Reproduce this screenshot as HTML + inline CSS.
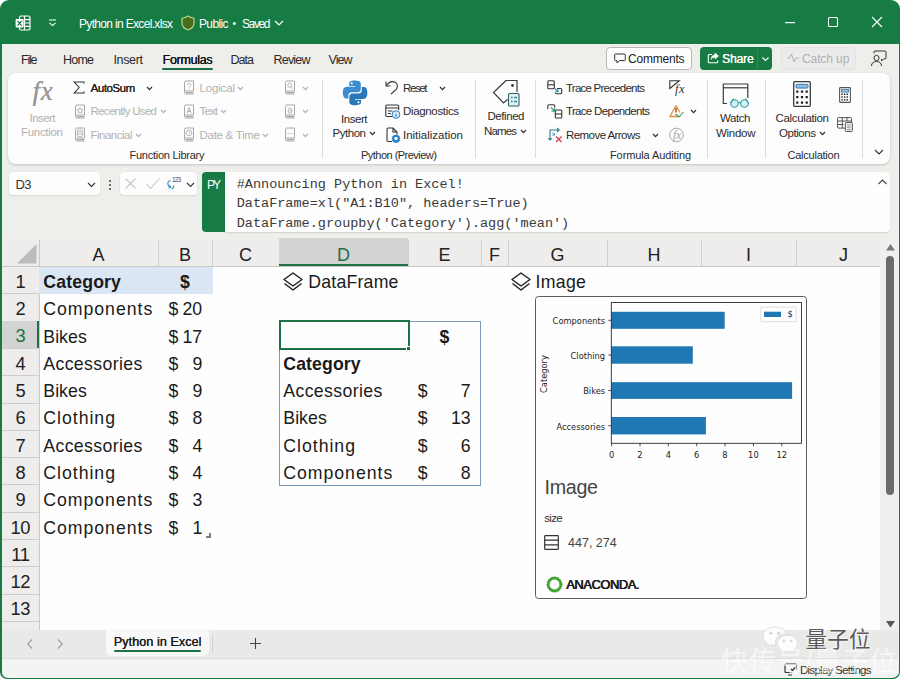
<!DOCTYPE html>
<html><head><meta charset="utf-8"><title>Python in Excel</title>
<style>
*{box-sizing:border-box;margin:0;padding:0}
html,body{width:900px;height:679px;overflow:hidden;background:#fff}
body{font-family:"Liberation Sans",sans-serif;color:#222;font-size:12px;position:relative}
.a{position:absolute;white-space:pre;line-height:1}
#win{position:absolute;left:0;top:0;width:900px;height:679px;background:#167c44;border-radius:9px 9px 7px 7px;overflow:hidden}
#inner{position:absolute;left:1.5px;top:43.5px;width:897.1px;height:633.8px;background:#eeeeeb;border-radius:0 0 5px 5px;overflow:hidden}
.tt{color:#fff;font-size:12px;letter-spacing:-.6px}
.mi{font-size:12px;color:#2a2a2a;top:54px;letter-spacing:-.2px}
#ribbon{position:absolute;left:8px;top:73px;width:882px;height:90.5px;background:#fdfdfd;border-radius:8px;box-shadow:0 1px 3px rgba(0,0,0,.18)}
.rt{font-size:11px;color:#2b2b2b;letter-spacing:-.15px}
.rd{font-size:11px;color:#b4b4b4;letter-spacing:-.15px}
.gl{font-size:10.5px;color:#2b2b2b;letter-spacing:-.1px;top:150px}
.sep{position:absolute;top:80px;width:1px;height:78px;background:#dcdcdc}
svg{position:absolute;overflow:visible}
</style></head><body>
<div id="win">
<div id="inner"></div>
<!-- TITLE BAR -->
<div id="titlebar">
<svg style="left:15px;top:15px" width="16" height="16" viewBox="0 0 16 16" fill="none" stroke="#fff" stroke-width="1.2"><rect x="4.5" y="1" width="10.5" height="14" rx="1.5"/><path d="M9.5 1v14M9.5 4.6h5.5M9.5 8h5.5M9.5 11.4h5.5"/><rect x="0.6" y="4" width="8" height="8.4" rx="1" fill="#fff" stroke="none"/><path d="M2.6 5.8l4 4.8M6.6 5.8l-4 4.8" stroke="#167c44" stroke-width="1.3"/></svg>
<svg style="left:48px;top:19px" width="9" height="8" viewBox="0 0 9 8" fill="none" stroke="#fff" stroke-width="1.1"><path d="M1 1h7M1.5 3.8l3 2.8 3-2.8"/></svg>
<svg style="left:181px;top:15px" width="14" height="16" viewBox="0 0 14 16"><path d="M7 1C5 2.4 3 3 1 3.2V8c0 3.4 2.6 5.8 6 7 3.4-1.200 6-3.600 6-7V3.200C11 3 9 2.400 7 1z" fill="#4a6d1c" stroke="#b9dc92" stroke-width="1.100"/></svg>
<svg style="left:274px;top:20px" width="10" height="6" viewBox="0 0 10 6" fill="none" stroke="#fff" stroke-width="1.200"><path d="M1 1l4 4 4-4"/></svg>
<svg style="left:785px;top:22px" width="10" height="1"><rect width="10" height="1.200" fill="#fff"/></svg>
<svg style="left:828px;top:17px" width="10" height="10" fill="none" stroke="#fff" stroke-width="1.100"><rect x=".5" y=".5" width="9" height="9" rx="1"/></svg>
<svg style="left:872px;top:17px" width="10" height="10" fill="none" stroke="#fff" stroke-width="1.100"><path d="M0 0l10 10M10 0L0 10"/></svg>
</div>
<!-- MENU BAR -->
<div id="menubar">
<span class="a" style="left:79.0px;top:18.0px;font-size:12px;letter-spacing:-0.67px;color:#fff;">Python in Excel.xlsx</span>
<span class="a" style="left:199.0px;top:18.0px;font-size:12px;letter-spacing:-0.64px;color:#fff;">Public</span>
<span class="a" style="left:232.5px;top:19.0px;font-size:10px;letter-spacing:-0.00px;color:#fff;">•</span>
<span class="a" style="left:242.0px;top:18.0px;font-size:12px;letter-spacing:-1.38px;color:#fff;">Saved</span>
<span class="a" style="left:21.0px;top:53.6px;font-size:12.5px;letter-spacing:-1.21px;color:#2a2a2a;">File</span>
<span class="a" style="left:63.0px;top:53.6px;font-size:12.5px;letter-spacing:-0.78px;color:#2a2a2a;">Home</span>
<span class="a" style="left:113.5px;top:53.6px;font-size:12.5px;letter-spacing:-0.35px;color:#2a2a2a;">Insert</span>
<span class="a" style="left:162.5px;top:53.6px;font-size:12.5px;letter-spacing:-0.30px;color:#111;text-shadow:.35px 0 0 #111;">Formulas</span>
<span class="a" style="left:230.5px;top:53.6px;font-size:12.5px;letter-spacing:-0.97px;color:#2a2a2a;">Data</span>
<span class="a" style="left:273.5px;top:53.6px;font-size:12.5px;letter-spacing:-0.80px;color:#2a2a2a;">Review</span>
<span class="a" style="left:328.5px;top:53.6px;font-size:12.5px;letter-spacing:-0.96px;color:#2a2a2a;">View</span>

<div class="a" style="left:162px;top:68px;width:51px;height:2px;background:#1b6e42;border-radius:1px"></div>
<div class="a" style="left:606px;top:47px;width:86px;height:23px;background:#fdfdfd;border:1px solid #b9b9b9;border-radius:4px"></div>
<svg style="left:614px;top:53px" width="12" height="11" viewBox="0 0 12 11" fill="none" stroke="#333" stroke-width="1"><path d="M1.500 1h9a.8.8 0 0 1 .8.8v5a.8.8 0 0 1-.8.8H5.500L3 10V7.600H1.500a.8.8 0 0 1-.8-.8v-5a.8.8 0 0 1 .8-.8z"/></svg>
<span class="a" style="left:628px;top:52.500px;font-size:12px;color:#222;letter-spacing:-.2px">Comments</span>
<div class="a" style="left:700px;top:47px;width:72px;height:23px;background:#167c44;border-radius:4px"></div>
<div class="a" style="left:757px;top:48px;width:1px;height:21px;background:#2f8a58"></div>
<svg style="left:707px;top:52px" width="13" height="12" viewBox="0 0 13 12" fill="none" stroke="#fff" stroke-width="1.100"><path d="M5 2.500H2.300a1 1 0 0 0-1 1v6.200a1 1 0 0 0 1 1h7.400a1 1 0 0 0 1-1V8.500"/><path d="M8 1l3.500 3L8 7V5.200C6 5.200 4.800 6 4 7.500 4.200 4.800 5.500 3 8 2.800z" fill="#fff" stroke-width=".6"/></svg>
<span class="a" style="left:722px;top:52.500px;font-size:12px;color:#fff;letter-spacing:-.1px;text-shadow:.3px 0 0 #fff">Share</span>
<svg style="left:762px;top:57px" width="7" height="4" viewBox="0 0 7 4" fill="none" stroke="#fff" stroke-width="1.100"><path d="M.5.500l3 3 3-3"/></svg>
<div class="a" style="left:781px;top:47px;width:75px;height:23px;background:#ebebeb;border:1px solid #e2e2e2;border-radius:4px"></div>
<svg style="left:787px;top:53px" width="12" height="10" viewBox="0 0 12 10" fill="none" stroke="#b5b5b5" stroke-width="1"><path d="M0 5h2.500l2-4 2.500 8 2-4h3"/></svg>
<span class="a" style="left:802px;top:52.500px;font-size:12px;color:#b0b0b0;letter-spacing:-.1px">Catch up</span>
<svg style="left:870px;top:50px" width="17" height="17" viewBox="0 0 17 17" fill="none" stroke="#333" stroke-width="1"><circle cx="6.500" cy="8" r="2.600"/><path d="M1.500 16c0-3 2-4.500 5-4.500s5 1.500 5 4.500"/><path d="M4 3.500V2a1 1 0 0 1 1-1h10a1 1 0 0 1 1 1v6a1 1 0 0 1-1 1h-1.500l-2 2V9"/></svg>

</div>
<!-- RIBBON -->
<div id="ribbon"></div>
<span class="a" style="left:32.5px;top:78.4px;font-size:26.5px;letter-spacing:0.87px;color:#989898;font-family:'Liberation Serif',serif;font-style:italic;text-shadow:.3px 0 0 #989898;">fx</span>
<span class="a" style="left:29.5px;top:113.3px;font-size:11.5px;letter-spacing:-0.55px;color:#b2b2b2;">Insert</span>
<span class="a" style="left:21.0px;top:127.0px;font-size:11.5px;letter-spacing:-0.30px;color:#b2b2b2;">Function</span>
<svg style="left:73px;top:81px" width="12" height="13" viewBox="0 0 12 13" ><path d="M11 2.500V1H1.200l5 5.500-5 5.500H11v-1.500" fill="none" stroke="#333" stroke-width="1.100"/></svg>
<span class="a" style="left:90.5px;top:83.3px;font-size:11.5px;letter-spacing:-0.47px;color:#1f1f1f;text-shadow:.3px 0 0 #1f1f1f;">AutoSum</span>
<svg style="left:146.0px;top:86.2px" width="7" height="4.6" viewBox="-1 -1 7 4.6" fill="none" stroke="#333" stroke-width="1.25"><path d="M0 0l2.5 2.6 2.5-2.6"/></svg>
<svg style="left:73.5px;top:104px" width="12" height="15" viewBox="0 0 12 15" ><g fill="none" stroke="#a8a8a8" stroke-width="1"><path d="M1.500 12.500V2.500a1.500 1.500 0 0 1 1.500-1.500h7.500v10H3a1.500 1.500 0 0 0 0 3h7.500"/><path d="M3 12.600h7.500" stroke-width="1.400"/><path d="M6 3.500l.9 1.800 2 .3-1.400 1.400.3 2L6 8.100 4.200 9l.3-2L3.100 5.600l2-.3z" stroke-width=".8"/></g></svg>
<span class="a" style="left:90.5px;top:106.3px;font-size:11.5px;letter-spacing:-0.69px;color:#b2b2b2;">Recently Used</span>
<svg style="left:159.5px;top:109.2px" width="7" height="4.6" viewBox="-1 -1 7 4.6" fill="none" stroke="#b2b2b2" stroke-width="1.25"><path d="M0 0l2.5 2.6 2.5-2.6"/></svg>
<svg style="left:73.5px;top:127px" width="12" height="15" viewBox="0 0 12 15" ><g fill="none" stroke="#a8a8a8" stroke-width="1"><path d="M1.500 12.500V2.500a1.500 1.500 0 0 1 1.500-1.500h7.500v10H3a1.500 1.500 0 0 0 0 3h7.500"/><path d="M3 12.600h7.500" stroke-width="1.400"/><ellipse cx="6" cy="4" rx="2.600" ry="1.200" stroke-width=".8"/><path d="M3.400 4v4.500c0 .7 1.200 1.200 2.600 1.200s2.600-.5 2.600-1.200V4M3.400 6.300c0 .7 1.200 1.200 2.600 1.200s2.600-.5 2.600-1.200" stroke-width=".8"/></g></svg>
<span class="a" style="left:90.5px;top:130.3px;font-size:11.5px;letter-spacing:-0.50px;color:#b2b2b2;">Financial</span>
<svg style="left:135.0px;top:133.2px" width="7" height="4.6" viewBox="-1 -1 7 4.6" fill="none" stroke="#b2b2b2" stroke-width="1.25"><path d="M0 0l2.5 2.6 2.5-2.6"/></svg>
<svg style="left:182.5px;top:80px" width="12" height="15" viewBox="0 0 12 15" ><g fill="none" stroke="#a8a8a8" stroke-width="1"><path d="M1.500 12.500V2.500a1.500 1.500 0 0 1 1.500-1.500h7.500v10H3a1.500 1.500 0 0 0 0 3h7.500"/><path d="M3 12.600h7.500" stroke-width="1.400"/><path d="M4.500 5c0-1 .6-1.700 1.600-1.700S7.700 4 7.700 4.800c0 1.200-1.600 1.300-1.600 2.600M6.100 8.800v.8" stroke-width=".9"/></g></svg>
<span class="a" style="left:199.5px;top:83.3px;font-size:11.5px;letter-spacing:-0.16px;color:#b2b2b2;">Logical</span>
<svg style="left:236.5px;top:86.2px" width="7" height="4.6" viewBox="-1 -1 7 4.6" fill="none" stroke="#b2b2b2" stroke-width="1.25"><path d="M0 0l2.5 2.6 2.5-2.6"/></svg>
<svg style="left:182.5px;top:104px" width="12" height="15" viewBox="0 0 12 15" ><g fill="none" stroke="#a8a8a8" stroke-width="1"><path d="M1.500 12.500V2.500a1.500 1.500 0 0 1 1.500-1.500h7.500v10H3a1.500 1.500 0 0 0 0 3h7.500"/><path d="M3 12.600h7.500" stroke-width="1.400"/><path d="M4 9.500l2.100-6 2.100 6M4.700 7.500h2.800" stroke-width=".9"/></g></svg>
<span class="a" style="left:199.5px;top:106.3px;font-size:11.5px;letter-spacing:-0.86px;color:#b2b2b2;">Text</span>
<svg style="left:220.0px;top:109.2px" width="7" height="4.6" viewBox="-1 -1 7 4.6" fill="none" stroke="#b2b2b2" stroke-width="1.25"><path d="M0 0l2.5 2.6 2.5-2.6"/></svg>
<svg style="left:182.5px;top:127px" width="12" height="15" viewBox="0 0 12 15" ><g fill="none" stroke="#a8a8a8" stroke-width="1"><path d="M1.500 12.500V2.500a1.500 1.500 0 0 1 1.500-1.500h7.500v10H3a1.500 1.500 0 0 0 0 3h7.500"/><path d="M3 12.600h7.500" stroke-width="1.400"/><circle cx="6" cy="6" r="2.800" stroke-width=".8"/><path d="M6 4.300V6l1.200.8" stroke-width=".8"/></g></svg>
<span class="a" style="left:199.5px;top:130.3px;font-size:11.5px;letter-spacing:-0.28px;color:#b2b2b2;">Date &amp; Time</span>
<svg style="left:261.5px;top:133.2px" width="7" height="4.6" viewBox="-1 -1 7 4.6" fill="none" stroke="#b2b2b2" stroke-width="1.25"><path d="M0 0l2.5 2.6 2.5-2.6"/></svg>
<svg style="left:283.5px;top:80px" width="12" height="15" viewBox="0 0 12 15" ><g fill="none" stroke="#a8a8a8" stroke-width="1"><path d="M1.500 12.500V2.500a1.500 1.500 0 0 1 1.500-1.500h7.500v10H3a1.500 1.500 0 0 0 0 3h7.500"/><path d="M3 12.600h7.500" stroke-width="1.400"/><circle cx="5.600" cy="5.200" r="2" stroke-width=".8"/><path d="M7 6.800l1.800 2" stroke-width=".9"/></g></svg>
<svg style="left:301.5px;top:86.2px" width="7" height="4.6" viewBox="-1 -1 7 4.6" fill="none" stroke="#b2b2b2" stroke-width="1.25"><path d="M0 0l2.5 2.6 2.5-2.6"/></svg>
<svg style="left:283.5px;top:104px" width="12" height="15" viewBox="0 0 12 15" ><g fill="none" stroke="#a8a8a8" stroke-width="1"><path d="M1.500 12.500V2.500a1.500 1.500 0 0 1 1.500-1.500h7.500v10H3a1.500 1.500 0 0 0 0 3h7.500"/><path d="M3 12.600h7.500" stroke-width="1.400"/><path d="M4.200 6a1.800 1.800 0 0 1 3.600 0v1.500a1.800 1.800 0 0 1-3.600 0zM4.200 6.800h3.600" stroke-width=".8"/></g></svg>
<svg style="left:301.5px;top:109.2px" width="7" height="4.6" viewBox="-1 -1 7 4.6" fill="none" stroke="#b2b2b2" stroke-width="1.25"><path d="M0 0l2.5 2.6 2.5-2.6"/></svg>
<svg style="left:283.5px;top:127px" width="12" height="15" viewBox="0 0 12 15" ><g fill="none" stroke="#a8a8a8" stroke-width="1"><path d="M1.500 12.500V2.500a1.500 1.500 0 0 1 1.500-1.500h7.500v10H3a1.500 1.500 0 0 0 0 3h7.500"/><path d="M3 12.600h7.500" stroke-width="1.400"/><path d="M3.600 6.500h.9M5.600 6.500h.9M7.600 6.500h.9" stroke-width="1.100"/></g></svg>
<svg style="left:301.5px;top:133.2px" width="7" height="4.6" viewBox="-1 -1 7 4.6" fill="none" stroke="#b2b2b2" stroke-width="1.25"><path d="M0 0l2.5 2.6 2.5-2.6"/></svg>
<span class="a" style="left:129.5px;top:149.5px;font-size:11px;letter-spacing:-0.26px;color:#2b2b2b;">Function Library</span>
<div class="sep" style="left:322px"></div>
<svg style="left:341.8px;top:80.2px" width="26.2" height="25.7" viewBox="0 0 25.600 25.100" ><path d="M12.700 0.500c-6 0-5.700 2.600-5.700 2.600v2.700h5.800v.8H4.700S.8 6.200.8 12.300s3.400 5.900 3.400 5.900h2v-2.800s-.1-3.400 3.300-3.400h5.700s3.200.1 3.200-3.100V3.700S18.900.500 12.700.500zM9.500 2.300a1 1 0 1 1 0 2.100 1 1 0 0 1 0-2.100z" fill="#3b8dd0"/><path d="M12.900 24.600c6 0 5.700-2.600 5.700-2.600v-2.700h-5.800v-.8h8.100s3.900.4 3.900-5.700-3.400-5.900-3.400-5.900h-2v2.800s.1 3.400-3.300 3.400H10.400s-3.200-.1-3.200 3.100v5.200s-.5 3.200 5.700 3.200zm3.200-1.800a1 1 0 1 1 0-2.100 1 1 0 0 1 0 2.100z" fill="#2877b9"/></svg>
<span class="a" style="left:341.0px;top:113.5px;font-size:11.5px;letter-spacing:-0.45px;color:#2b2b2b;">Insert</span>
<span class="a" style="left:332.5px;top:128.3px;font-size:11.5px;letter-spacing:-0.46px;color:#2b2b2b;">Python</span>
<svg style="left:369.0px;top:131.2px" width="7" height="4.6" viewBox="-1 -1 7 4.6" fill="none" stroke="#333" stroke-width="1.25"><path d="M0 0l2.5 2.6 2.5-2.6"/></svg>
<svg style="left:385px;top:80px" width="14" height="15" viewBox="0 0 14 15" ><path d="M1 1.500v4.500h4.500" fill="none" stroke="#333" stroke-width="1.100"/><path d="M1.300 5.800C3.500 2.500 7 .800 10 2.200c2.800 1.300 3.200 4.800 1 7.500L6 14" fill="none" stroke="#333" stroke-width="1.100"/></svg>
<span class="a" style="left:403.0px;top:83.3px;font-size:11.5px;letter-spacing:-1.39px;color:#2b2b2b;">Reset</span>
<svg style="left:438.5px;top:86.2px" width="7" height="4.6" viewBox="-1 -1 7 4.6" fill="none" stroke="#333" stroke-width="1.25"><path d="M0 0l2.5 2.6 2.5-2.6"/></svg>
<svg style="left:384.5px;top:104px" width="16" height="15" viewBox="0 0 16 15" ><g fill="none" stroke="#333" stroke-width="1.100"><path d="M7.500 12.500H2a1.200 1.200 0 0 1-1.200-1.200V2.200A1.200 1.200 0 0 1 2 1h10.500a1.200 1.200 0 0 1 1.200 1.200V6M.8 4h12.900M3 7h4.500M3 9.500h3"/></g><circle cx="11" cy="10.500" r="3.800" fill="#d7ecfa" stroke="#2b7fc3" stroke-width="1"/><path d="M11 8.300v.2M11 10v2.500" stroke="#2b7fc3" stroke-width="1.200"/></svg>
<span class="a" style="left:403.0px;top:106.3px;font-size:11.5px;letter-spacing:-0.34px;color:#2b2b2b;">Diagnostics</span>
<svg style="left:386px;top:127px" width="15" height="16" viewBox="0 0 15 16" ><path d="M6 14.500H2.200A1.200 1.200 0 0 1 1 13.300V2.200A1.200 1.200 0 0 1 2.200 1H7l4 4v2.500M7 1v4h4" fill="none" stroke="#333" stroke-width="1.100"/><g transform="translate(10 11.500)"><path d="M0-4.200l1 .9 1.300-.4.400 1.300 1.300.4-.4 1.300.9 1-.9 1 .4 1.300-1.300.4-.4 1.300-1.300-.4-1 .9-1-.9-1.300.4-.4-1.300-1.300-.4.400-1.300-.9-1 .9-1-.4-1.300 1.300-.4.400-1.300 1.300.4z" fill="#2b7fc3"/><circle r="1.700" fill="#f4f9fd"/></g></svg>
<span class="a" style="left:403.0px;top:130.3px;font-size:11.5px;letter-spacing:-0.01px;color:#2b2b2b;">Initialization</span>
<span class="a" style="left:361.0px;top:149.5px;font-size:11px;letter-spacing:-0.52px;color:#2b2b2b;">Python (Preview)</span>
<div class="sep" style="left:475px"></div>
<svg style="left:492px;top:79px" width="30" height="28" viewBox="0 0 30 28" ><path d="M14 1.500L1.500 13.500 11.500 24l4-3.500M14 1.500h11v11.500" fill="none" stroke="#3a3a3a" stroke-width="1.200"/><circle cx="20.500" cy="6.500" r="1.400" fill="#3a3a3a"/><rect x="16.500" y="14.500" width="10.500" height="12.500" rx="1" fill="#e3f1f3" stroke="#2f5d66" stroke-width="1.100"/><path d="M19 18.500h1.600M22 18.500h3M19 22.500h1.600M22 22.500h3" stroke="#2f8a99" stroke-width="1.400" fill="none"/></svg>
<span class="a" style="left:487.5px;top:111.3px;font-size:11.5px;letter-spacing:-0.44px;color:#2b2b2b;">Defined</span>
<span class="a" style="left:484.0px;top:126.3px;font-size:11.5px;letter-spacing:-0.86px;color:#2b2b2b;">Names</span>
<svg style="left:519.5px;top:129.2px" width="7" height="4.6" viewBox="-1 -1 7 4.6" fill="none" stroke="#333" stroke-width="1.25"><path d="M0 0l2.5 2.6 2.5-2.6"/></svg>
<div class="sep" style="left:535px"></div>
<svg style="left:547px;top:80px" width="16" height="15" viewBox="0 0 16 15" ><g fill="none" stroke="#333" stroke-width="1.100"><rect x=".8" y=".8" width="6.500" height="8" rx="1"/><path d="M.8 4.800h6.500"/><path d="M10 8.500h3.500a1.200 1.200 0 0 1 1.200 1.200v2.800a1.200 1.200 0 0 1-1.200 1.200H9.500a1.200 1.200 0 0 1-1.200-1.200"/></g><path d="M7.800 8.500l3 3M8.500 11.600h2.500V9" fill="none" stroke="#2d9aa8" stroke-width="1.100"/></svg>
<span class="a" style="left:566.0px;top:83.3px;font-size:11.5px;letter-spacing:-0.76px;color:#2b2b2b;">Trace Precedents</span>
<svg style="left:547px;top:104px" width="16" height="15" viewBox="0 0 16 15" ><g fill="none" stroke="#333" stroke-width="1.100"><path d="M.8 5V2a1.200 1.200 0 0 1 1.200-1.200h4.500A1.200 1.200 0 0 1 7.700 2v1.500"/><rect x="8.300" y="6" width="6.500" height="8" rx="1"/><path d="M8.300 10h6.500"/></g><path d="M4 3.500l3.500 3.500M4.500 7.200h3.200V4" fill="none" stroke="#2d9a70" stroke-width="1.100"/></svg>
<span class="a" style="left:566.0px;top:106.3px;font-size:11.5px;letter-spacing:-0.68px;color:#2b2b2b;">Trace Dependents</span>
<svg style="left:547px;top:127px" width="17" height="16" viewBox="0 0 17 16" ><path d="M3 13V3h9M10 1l2.200 2L10 5M1 11l2 2.200L5 11" fill="none" stroke="#3c7f8c" stroke-width="1.100"/><path d="M5 5.500l2.500 2.500M5.500 8.100h2.100V6" fill="none" stroke="#2d9aa8" stroke-width=".9"/><path d="M9 9.500l5.500 5.500M14.500 9.500L9 15" stroke="#d8364a" stroke-width="1.200"/></svg>
<span class="a" style="left:566.0px;top:130.3px;font-size:11.5px;letter-spacing:-0.56px;color:#2b2b2b;">Remove Arrows</span>
<svg style="left:651.5px;top:133.2px" width="7" height="4.6" viewBox="-1 -1 7 4.6" fill="none" stroke="#333" stroke-width="1.25"><path d="M0 0l2.5 2.6 2.5-2.6"/></svg>
<svg style="left:669px;top:80px" width="16" height="15" viewBox="0 0 16 15" ><path d="M.8 8.500V.8h9.500z" fill="none" stroke="#333" stroke-width="1.100"/></svg>
<span class="a" style="left:675.0px;top:82.8px;font-size:12.5px;letter-spacing:0.48px;color:#333;font-family:'Liberation Serif',serif;font-style:italic;">fx</span>
<svg style="left:669px;top:104px" width="16" height="15" viewBox="0 0 16 15" ><path d="M7 1.500L1 12.500h8" fill="none" stroke="#e0913a" stroke-width="1.300"/><path d="M7 1.500l4 7" fill="none" stroke="#e0913a" stroke-width="1.300"/><path d="M7 4v4.500M7 10v1" stroke="#8a4a12" stroke-width="1.400"/><path d="M7.500 10.500l2.500 2.500 4.500-5" fill="none" stroke="#3d9b4b" stroke-width="1.100"/></svg>
<svg style="left:689.5px;top:109.2px" width="7" height="4.6" viewBox="-1 -1 7 4.6" fill="none" stroke="#333" stroke-width="1.25"><path d="M0 0l2.5 2.6 2.5-2.6"/></svg>
<svg style="left:669px;top:127px" width="16" height="16" viewBox="0 0 16 16" ><circle cx="7.500" cy="8" r="6.800" fill="none" stroke="#a6a6a6" stroke-width="1"/></svg>
<span class="a" style="left:673.0px;top:130.3px;font-size:11.5px;letter-spacing:-0.30px;color:#a6a6a6;font-family:'Liberation Serif',serif;font-style:italic;">fx</span>
<span class="a" style="left:610.0px;top:149.5px;font-size:11px;letter-spacing:-0.10px;color:#2b2b2b;">Formula Auditing</span>
<div class="sep" style="left:707px"></div>
<svg style="left:722px;top:83px" width="29" height="26" viewBox="0 0 29 26" ><path d="M5 20.500H1.300V1h24.500v14" fill="none" stroke="#3a3a3a" stroke-width="1.200"/><path d="M1.300 4.800h24.500" stroke="#3a3a3a" stroke-width="1.200"/><circle cx="12.500" cy="20.500" r="3.800" fill="#d5f0f1" stroke="#2d9aa8" stroke-width="1.100"/><circle cx="22.500" cy="20.500" r="3.800" fill="#d5f0f1" stroke="#2d9aa8" stroke-width="1.100"/><path d="M16.300 20c.8-.8 1.600-.8 2.400 0M8.700 20l3-4.500M26.300 20l-3-4.500" fill="none" stroke="#2d9aa8" stroke-width="1.100"/></svg>
<span class="a" style="left:720.0px;top:112.8px;font-size:11.5px;letter-spacing:-0.42px;color:#2b2b2b;">Watch</span>
<span class="a" style="left:716.0px;top:127.8px;font-size:11.5px;letter-spacing:-0.28px;color:#2b2b2b;">Window</span>
<div class="sep" style="left:765px"></div>
<svg style="left:793px;top:81px" width="18" height="26" viewBox="0 0 18 26" ><rect x=".7" y=".7" width="16.600" height="24.600" rx="1" fill="#fdfdfd" stroke="#3a3a3a" stroke-width="1.300"/><rect x="3" y="3.300" width="12" height="3.800" rx=".8" fill="#8fc0e8" stroke="#2a6aa6" stroke-width=".9"/><rect x="3.2" y="9.5" width="2.200" height="2.200" fill="#1a1a1a"/><rect x="7.9" y="9.5" width="2.200" height="2.200" fill="#1a1a1a"/><rect x="12.6" y="9.5" width="2.200" height="2.200" fill="#1a1a1a"/><rect x="3.2" y="15" width="2.200" height="2.200" fill="#1a1a1a"/><rect x="7.9" y="15" width="2.200" height="2.200" fill="#1a1a1a"/><rect x="12.6" y="15" width="2.200" height="2.200" fill="#1a1a1a"/><rect x="3.2" y="20.5" width="2.200" height="2.200" fill="#1a1a1a"/><rect x="7.9" y="20.5" width="2.200" height="2.200" fill="#1a1a1a"/><rect x="12.6" y="20.5" width="2.200" height="2.200" fill="#1a1a1a"/></svg>
<span class="a" style="left:775.5px;top:112.8px;font-size:11.5px;letter-spacing:-0.34px;color:#2b2b2b;">Calculation</span>
<span class="a" style="left:779.0px;top:127.8px;font-size:11.5px;letter-spacing:-0.44px;color:#2b2b2b;">Options</span>
<svg style="left:819.0px;top:130.7px" width="7" height="4.6" viewBox="-1 -1 7 4.6" fill="none" stroke="#333" stroke-width="1.25"><path d="M0 0l2.5 2.6 2.5-2.6"/></svg>
<svg style="left:839px;top:87px" width="12" height="16" viewBox="0 0 12 16" ><rect x=".6" y=".6" width="10.800" height="14.800" rx=".8" fill="#fdfdfd" stroke="#555" stroke-width="1.100"/><rect x="2.300" y="2.500" width="7.400" height="2.600" fill="#8fc0e8" stroke="#2a6aa6" stroke-width=".7"/><rect x="2.3" y="6.5" width="1.500" height="1.500" fill="#333"/><rect x="4.9" y="6.5" width="1.500" height="1.500" fill="#333"/><rect x="7.5" y="6.5" width="1.500" height="1.500" fill="#333"/><rect x="2.3" y="9.3" width="1.500" height="1.500" fill="#333"/><rect x="4.9" y="9.3" width="1.500" height="1.500" fill="#333"/><rect x="7.5" y="9.3" width="1.500" height="1.500" fill="#333"/><rect x="2.3" y="12.1" width="1.500" height="1.500" fill="#333"/><rect x="4.9" y="12.1" width="1.500" height="1.500" fill="#333"/><rect x="7.5" y="12.1" width="1.500" height="1.500" fill="#333"/></svg>
<svg style="left:837px;top:117px" width="16" height="15" viewBox="0 0 16 15" ><g fill="none" stroke="#555" stroke-width="1"><rect x=".6" y=".6" width="14" height="10.500" rx=".8"/><path d="M.6 4h14M5.300 .6v10.500M10 .6V4M.6 7.500h6"/></g><rect x="8.300" y="5.500" width="7" height="9" rx=".8" fill="#f0f0f0" stroke="#555" stroke-width="1"/><path d="M10 8h3.600M10 10.200h3.600M10 12.400h3.600" stroke="#777" stroke-width=".8"/></svg>
<span class="a" style="left:787.5px;top:149.5px;font-size:11px;letter-spacing:-0.24px;color:#2b2b2b;">Calculation</span>
<div class="sep" style="left:862px"></div>
<svg style="left:874.0px;top:148.5px" width="10" height="6" viewBox="-1 -1 10 6" fill="none" stroke="#333" stroke-width="1.1"><path d="M0 0l4.0 4 4.0-4"/></svg>

<div style="position:absolute;background:#fdfdfd;border-radius:4px;box-shadow:0 0 0 .5px #e3e3e3,0 1px 1.500px rgba(0,0,0,.13);left:9px;top:172px;width:91px;height:23px"></div>
<span class="a" style="left:15.5px;top:177.8px;font-size:13px;letter-spacing:-0.62px;color:#333;">D3</span>
<svg style="left:86.5px;top:181.8px" width="9" height="5.5" viewBox="-1 -1 9 5.5" fill="none" stroke="#333" stroke-width="1.1"><path d="M0 0l3.5 3.5 3.5-3.5"/></svg>
<div class="a" style="left:108.500px;top:179.5px;width:2px;height:2px;border-radius:1px;background:#444"></div>
<div class="a" style="left:108.500px;top:183.5px;width:2px;height:2px;border-radius:1px;background:#444"></div>
<div class="a" style="left:108.500px;top:187.5px;width:2px;height:2px;border-radius:1px;background:#444"></div>
<div style="position:absolute;background:#fdfdfd;border-radius:4px;box-shadow:0 0 0 .5px #e3e3e3,0 1px 1.500px rgba(0,0,0,.13);left:120px;top:172px;width:77px;height:23px"></div>
<svg style="left:125px;top:178px" width="11" height="11" fill="none" stroke="#c6c6c6" stroke-width="1.100"><path d="M.5.500l10 10M10.500.500l-10 10"/></svg>
<svg style="left:146px;top:178px" width="14" height="11" fill="none" stroke="#c6c6c6" stroke-width="1.100"><path d="M.5 6l4 4.500 9-10"/></svg>
<svg style="left:166px;top:176px" width="16" height="15" viewBox="0 0 16 15" fill="none"><path d="M4.500 4.500C2.500 5 1.500 6.500 2 8.500c.4 1.300 1.300 2 2.500 2.300" stroke="#3a8fd0" stroke-width="1.200"/><path d="M3 9l1.800 2-2.300 1.300" stroke="#3a8fd0" stroke-width="1.100"/><path d="M5.500 13c1.800-.5 2.500-2 2-3.500" stroke="#3aa88a" stroke-width="1.200"/></svg>
<span class="a" style="left:172.0px;top:177.2px;font-size:6.5px;letter-spacing:-0.92px;color:#444;">123</span>
<svg style="left:185.5px;top:181.8px" width="9" height="5.5" viewBox="-1 -1 9 5.5" fill="none" stroke="#333" stroke-width="1.1"><path d="M0 0l3.5 3.5 3.5-3.5"/></svg>
<div class="a" style="left:202px;top:172px;width:24px;height:60px;background:#167c44;border-radius:4px 0 0 4px"></div>
<span class="a" style="left:207.0px;top:178.5px;font-size:12px;letter-spacing:-2.01px;color:#fff;">PY</span>
<div class="a" style="left:225px;top:172px;width:665px;height:60px;background:#fdfdfd;border-radius:0 4px 4px 0;box-shadow:0 1px 1.500px rgba(0,0,0,.12)"></div>
<span class="a" style="left:236.700px;top:178.2px;font-size:13.52px;font-family:'Liberation Mono',monospace;color:#3a3a3a">#Announcing Python in Excel!</span>
<span class="a" style="left:236.700px;top:197.4px;font-size:13.52px;font-family:'Liberation Mono',monospace;color:#3a3a3a">DataFrame=xl("A1:B10", headers=True)</span>
<span class="a" style="left:236.700px;top:216.5px;font-size:13.52px;font-family:'Liberation Mono',monospace;color:#3a3a3a">DataFrame.groupby('Category').agg('mean')</span>
<svg style="left:878px;top:179px" width="9" height="6" fill="none" stroke="#444" stroke-width="1.100"><path d="M.5 5l4-4 4 4"/></svg>

<div class="a" style="left:2px;top:238px;width:896px;height:392px;background:#eeedeb"></div>
<div class="a" style="left:39px;top:266px;width:841px;height:364px;background:#fefefe"></div>
<div class="a" style="left:2px;top:265.500px;width:878px;height:1px;background:#c9c9c9"></div>
<svg style="left:16.500px;top:243.500px" width="19.500" height="19.500"><path d="M19.500 0v19.500H0z" fill="#bcbcbc"/></svg>
<span class="a" style="left:92.5px;top:245.7px;font-size:18px;letter-spacing:0.00px;color:#222;">A</span>
<div class="a" style="left:157.5px;top:240px;width:1px;height:26px;background:#d0d0d0"></div>
<span class="a" style="left:179.0px;top:245.7px;font-size:18px;letter-spacing:-0.00px;color:#222;">B</span>
<div class="a" style="left:211.5px;top:240px;width:1px;height:26px;background:#d0d0d0"></div>
<span class="a" style="left:239.0px;top:245.7px;font-size:18px;letter-spacing:-0.00px;color:#222;">C</span>
<div class="a" style="left:278.5px;top:240px;width:1px;height:26px;background:#d0d0d0"></div>
<div class="a" style="left:279px;top:238px;width:129px;height:28px;background:#d3d3d3;border-bottom:2px solid #1e7145"></div>
<span class="a" style="left:337.0px;top:245.7px;font-size:18px;letter-spacing:-0.00px;color:#1e7145;">D</span>
<div class="a" style="left:407.5px;top:240px;width:1px;height:26px;background:#d0d0d0"></div>
<span class="a" style="left:438.5px;top:245.7px;font-size:18px;letter-spacing:-0.00px;color:#222;">E</span>
<div class="a" style="left:480.5px;top:240px;width:1px;height:26px;background:#d0d0d0"></div>
<span class="a" style="left:489.0px;top:245.7px;font-size:18px;letter-spacing:0.00px;color:#222;">F</span>
<div class="a" style="left:507.5px;top:240px;width:1px;height:26px;background:#d0d0d0"></div>
<span class="a" style="left:550.5px;top:245.7px;font-size:18px;letter-spacing:0.00px;color:#222;">G</span>
<div class="a" style="left:606.5px;top:240px;width:1px;height:26px;background:#d0d0d0"></div>
<span class="a" style="left:647.5px;top:245.7px;font-size:18px;letter-spacing:0.00px;color:#222;">H</span>
<div class="a" style="left:700.5px;top:240px;width:1px;height:26px;background:#d0d0d0"></div>
<span class="a" style="left:746.0px;top:245.7px;font-size:18px;letter-spacing:0.00px;color:#222;">I</span>
<div class="a" style="left:795.5px;top:240px;width:1px;height:26px;background:#d0d0d0"></div>
<span class="a" style="left:839.0px;top:245.7px;font-size:18px;letter-spacing:0.00px;color:#222;">J</span>
<div class="a" style="left:879.5px;top:240px;width:1px;height:26px;background:#d0d0d0"></div>
<div class="a" style="left:38.500px;top:240px;width:1px;height:390px;background:#c9c9c9"></div>
<span class="a" style="left:15.5px;top:272.8px;font-size:18.3px;letter-spacing:-0.17px;color:#222;">1</span>
<div class="a" style="left:2px;top:293.3px;width:37px;height:1px;background:#cdcdcd"></div>
<span class="a" style="left:15.5px;top:300.1px;font-size:18.3px;letter-spacing:-0.17px;color:#222;">2</span>
<div class="a" style="left:2px;top:320.6px;width:37px;height:1px;background:#cdcdcd"></div>
<div class="a" style="left:2px;top:321.1px;width:37px;height:27.3px;background:#d3d3d3;border-right:2px solid #1e7145"></div>
<span class="a" style="left:15.5px;top:327.4px;font-size:18.3px;letter-spacing:-0.17px;color:#1e7145;">3</span>
<div class="a" style="left:2px;top:347.9px;width:37px;height:1px;background:#cdcdcd"></div>
<span class="a" style="left:15.5px;top:354.7px;font-size:18.3px;letter-spacing:-0.17px;color:#222;">4</span>
<div class="a" style="left:2px;top:375.2px;width:37px;height:1px;background:#cdcdcd"></div>
<span class="a" style="left:15.5px;top:382.0px;font-size:18.3px;letter-spacing:-0.17px;color:#222;">5</span>
<div class="a" style="left:2px;top:402.5px;width:37px;height:1px;background:#cdcdcd"></div>
<span class="a" style="left:15.5px;top:409.3px;font-size:18.3px;letter-spacing:-0.17px;color:#222;">6</span>
<div class="a" style="left:2px;top:429.8px;width:37px;height:1px;background:#cdcdcd"></div>
<span class="a" style="left:15.5px;top:436.6px;font-size:18.3px;letter-spacing:-0.17px;color:#222;">7</span>
<div class="a" style="left:2px;top:457.1px;width:37px;height:1px;background:#cdcdcd"></div>
<span class="a" style="left:15.5px;top:463.9px;font-size:18.3px;letter-spacing:-0.17px;color:#222;">8</span>
<div class="a" style="left:2px;top:484.4px;width:37px;height:1px;background:#cdcdcd"></div>
<span class="a" style="left:15.5px;top:491.2px;font-size:18.3px;letter-spacing:-0.17px;color:#222;">9</span>
<div class="a" style="left:2px;top:511.7px;width:37px;height:1px;background:#cdcdcd"></div>
<span class="a" style="left:10.5px;top:518.5px;font-size:18.3px;letter-spacing:-0.33px;color:#222;">10</span>
<div class="a" style="left:2px;top:539.0px;width:37px;height:1px;background:#cdcdcd"></div>
<span class="a" style="left:11.2px;top:545.8px;font-size:18.3px;letter-spacing:-0.31px;color:#222;">11</span>
<div class="a" style="left:2px;top:566.3px;width:37px;height:1px;background:#cdcdcd"></div>
<span class="a" style="left:10.5px;top:573.1px;font-size:18.3px;letter-spacing:-0.33px;color:#222;">12</span>
<div class="a" style="left:2px;top:593.6px;width:37px;height:1px;background:#cdcdcd"></div>
<span class="a" style="left:10.5px;top:600.4px;font-size:18.3px;letter-spacing:-0.33px;color:#222;">13</span>
<div class="a" style="left:2px;top:620.9px;width:37px;height:1px;background:#cdcdcd"></div>
<div class="a" style="left:2px;top:648.2px;width:37px;height:1px;background:#cdcdcd"></div>
<div class="a" style="left:39px;top:266.5px;width:173.500px;height:27.8px;background:#dae6f4"></div>
<span class="a" style="left:43.3px;top:273.9px;font-size:17.7px;letter-spacing:0.14px;color:#1a1a1a;font-weight:700;">Category</span>
<span class="a" style="left:180.1px;top:273.9px;font-size:17.7px;letter-spacing:-0.00px;color:#1a1a1a;font-weight:700;">$</span>
<span class="a" style="left:43.3px;top:301.2px;font-size:17.7px;letter-spacing:0.96px;color:#1a1a1a;">Components</span>
<span class="a" style="left:168.6px;top:301.2px;font-size:17.7px;letter-spacing:-0.15px;color:#1a1a1a;">$</span>
<span class="a" style="left:182.5px;top:301.2px;font-size:17.7px;letter-spacing:0.00px;color:#1a1a1a;">20</span>
<span class="a" style="left:43.3px;top:328.5px;font-size:17.7px;letter-spacing:0.05px;color:#1a1a1a;">Bikes</span>
<span class="a" style="left:168.6px;top:328.5px;font-size:17.7px;letter-spacing:-0.15px;color:#1a1a1a;">$</span>
<span class="a" style="left:182.5px;top:328.5px;font-size:17.7px;letter-spacing:0.00px;color:#1a1a1a;">17</span>
<span class="a" style="left:43.3px;top:355.8px;font-size:17.7px;letter-spacing:0.36px;color:#1a1a1a;">Accessories</span>
<span class="a" style="left:168.6px;top:355.8px;font-size:17.7px;letter-spacing:-0.15px;color:#1a1a1a;">$</span>
<span class="a" style="left:192.4px;top:355.8px;font-size:17.7px;letter-spacing:0.00px;color:#1a1a1a;">9</span>
<span class="a" style="left:43.3px;top:383.1px;font-size:17.7px;letter-spacing:0.05px;color:#1a1a1a;">Bikes</span>
<span class="a" style="left:168.6px;top:383.1px;font-size:17.7px;letter-spacing:-0.15px;color:#1a1a1a;">$</span>
<span class="a" style="left:192.4px;top:383.1px;font-size:17.7px;letter-spacing:0.00px;color:#1a1a1a;">9</span>
<span class="a" style="left:43.3px;top:410.4px;font-size:17.7px;letter-spacing:0.97px;color:#1a1a1a;">Clothing</span>
<span class="a" style="left:168.6px;top:410.4px;font-size:17.7px;letter-spacing:-0.15px;color:#1a1a1a;">$</span>
<span class="a" style="left:192.4px;top:410.4px;font-size:17.7px;letter-spacing:0.00px;color:#1a1a1a;">8</span>
<span class="a" style="left:43.3px;top:437.7px;font-size:17.7px;letter-spacing:0.36px;color:#1a1a1a;">Accessories</span>
<span class="a" style="left:168.6px;top:437.7px;font-size:17.7px;letter-spacing:-0.15px;color:#1a1a1a;">$</span>
<span class="a" style="left:192.4px;top:437.7px;font-size:17.7px;letter-spacing:0.00px;color:#1a1a1a;">4</span>
<span class="a" style="left:43.3px;top:465.0px;font-size:17.7px;letter-spacing:0.97px;color:#1a1a1a;">Clothing</span>
<span class="a" style="left:168.6px;top:465.0px;font-size:17.7px;letter-spacing:-0.15px;color:#1a1a1a;">$</span>
<span class="a" style="left:192.4px;top:465.0px;font-size:17.7px;letter-spacing:0.00px;color:#1a1a1a;">4</span>
<span class="a" style="left:43.3px;top:492.3px;font-size:17.7px;letter-spacing:0.96px;color:#1a1a1a;">Components</span>
<span class="a" style="left:168.6px;top:492.3px;font-size:17.7px;letter-spacing:-0.15px;color:#1a1a1a;">$</span>
<span class="a" style="left:192.4px;top:492.3px;font-size:17.7px;letter-spacing:0.00px;color:#1a1a1a;">3</span>
<span class="a" style="left:43.3px;top:519.6px;font-size:17.7px;letter-spacing:0.96px;color:#1a1a1a;">Components</span>
<span class="a" style="left:168.6px;top:519.6px;font-size:17.7px;letter-spacing:-0.15px;color:#1a1a1a;">$</span>
<span class="a" style="left:192.4px;top:519.6px;font-size:17.7px;letter-spacing:0.00px;color:#1a1a1a;">1</span>
<svg style="left:206px;top:532.5px" width="5" height="5"><path d="M4 0v4H0" fill="none" stroke="#555" stroke-width="1.500"/></svg>
<svg style="left:283px;top:272px" width="20" height="20" viewBox="0 0 20 20" fill="none" stroke="#222" stroke-width="1.500" stroke-linejoin="round"><path d="M10 1l9 6.500-9 6.500-9-6.500z"/><path d="M1.500 11.500L10 18l8.500-6.500"/></svg>
<span class="a" style="left:308.3px;top:273.9px;font-size:17.7px;letter-spacing:0.21px;color:#1a1a1a;">DataFrame</span>
<div class="a" style="left:279px;top:320.500px;width:202px;height:165px;border:1px solid #7b98bd"></div>
<div class="a" style="left:278.500px;top:320.300px;width:131px;height:29.300px;border:2px solid #1e7145"></div>
<div class="a" style="left:405.500px;top:345.500px;width:5.500px;height:5.500px;background:#1e7145;border:1px solid #fff"></div>
<span class="a" style="left:439.4px;top:328.5px;font-size:17.7px;letter-spacing:0.00px;color:#1a1a1a;font-weight:700;">$</span>
<span class="a" style="left:283.3px;top:355.8px;font-size:17.7px;letter-spacing:0.10px;color:#1a1a1a;font-weight:700;">Category</span>
<span class="a" style="left:283.3px;top:383.1px;font-size:17.7px;letter-spacing:0.36px;color:#1a1a1a;">Accessories</span>
<span class="a" style="left:417.7px;top:383.1px;font-size:17.7px;letter-spacing:-0.05px;color:#1a1a1a;">$</span>
<span class="a" style="left:460.8px;top:383.1px;font-size:17.7px;letter-spacing:-0.00px;color:#1a1a1a;">7</span>
<span class="a" style="left:283.3px;top:410.4px;font-size:17.7px;letter-spacing:0.05px;color:#1a1a1a;">Bikes</span>
<span class="a" style="left:417.7px;top:410.4px;font-size:17.7px;letter-spacing:-0.05px;color:#1a1a1a;">$</span>
<span class="a" style="left:450.9px;top:410.4px;font-size:17.7px;letter-spacing:-0.00px;color:#1a1a1a;">13</span>
<span class="a" style="left:283.3px;top:437.7px;font-size:17.7px;letter-spacing:0.97px;color:#1a1a1a;">Clothing</span>
<span class="a" style="left:417.7px;top:437.7px;font-size:17.7px;letter-spacing:-0.05px;color:#1a1a1a;">$</span>
<span class="a" style="left:460.8px;top:437.7px;font-size:17.7px;letter-spacing:-0.00px;color:#1a1a1a;">6</span>
<span class="a" style="left:283.3px;top:465.0px;font-size:17.7px;letter-spacing:0.96px;color:#1a1a1a;">Components</span>
<span class="a" style="left:417.7px;top:465.0px;font-size:17.7px;letter-spacing:-0.05px;color:#1a1a1a;">$</span>
<span class="a" style="left:460.8px;top:465.0px;font-size:17.7px;letter-spacing:-0.00px;color:#1a1a1a;">8</span>
<svg style="left:511px;top:272px" width="20" height="20" viewBox="0 0 20 20" fill="none" stroke="#222" stroke-width="1.500" stroke-linejoin="round"><path d="M10 1l9 6.500-9 6.500-9-6.500z"/><path d="M1.500 11.500L10 18l8.500-6.500"/></svg>
<span class="a" style="left:535.6px;top:273.9px;font-size:17.7px;letter-spacing:0.30px;color:#1a1a1a;">Image</span>
<div class="a" style="left:535.300px;top:295.500px;width:271.400px;height:303.800px;background:#fefefe;border:1.500px solid #5b5b5b;border-radius:3.500px"></div>
<svg style="left:0;top:0" width="900" height="679" viewBox="0 0 900 679" font-family="'DejaVu Sans',sans-serif" font-size="8.300" fill="#1a1a1a"><rect x="611.3" y="311.8" width="113.4" height="17.0" fill="#1f77b4"/><path d="M608.3 320.3h3" stroke="#222" stroke-width=".8"/><text x="605.0999999999999" y="324.2" text-anchor="end">Components</text><rect x="611.3" y="346.3" width="81.5" height="17.4" fill="#1f77b4"/><path d="M608.3 355.0h3" stroke="#222" stroke-width=".8"/><text x="605.0999999999999" y="358.9" text-anchor="end">Clothing</text><rect x="611.3" y="382.2" width="180.8" height="16.7" fill="#1f77b4"/><path d="M608.3 390.5h3" stroke="#222" stroke-width=".8"/><text x="605.0999999999999" y="394.4" text-anchor="end">Bikes</text><rect x="611.3" y="417" width="94.6" height="17.4" fill="#1f77b4"/><path d="M608.3 425.7h3" stroke="#222" stroke-width=".8"/><text x="605.0999999999999" y="429.6" text-anchor="end">Accessories</text><rect x="611.3" y="302.5" width="190.2" height="140.8" fill="none" stroke="#2a2a2a" stroke-width=".9"/><path d="M611.6 443.3v3" stroke="#222" stroke-width=".8"/><text x="611.6" y="457.900" text-anchor="middle">0</text><path d="M640.0 443.3v3" stroke="#222" stroke-width=".8"/><text x="640.0" y="457.900" text-anchor="middle">2</text><path d="M668.3 443.3v3" stroke="#222" stroke-width=".8"/><text x="668.3" y="457.900" text-anchor="middle">4</text><path d="M696.7 443.3v3" stroke="#222" stroke-width=".8"/><text x="696.7" y="457.900" text-anchor="middle">6</text><path d="M725.0 443.3v3" stroke="#222" stroke-width=".8"/><text x="725.0" y="457.900" text-anchor="middle">8</text><path d="M753.4 443.3v3" stroke="#222" stroke-width=".8"/><text x="753.4" y="457.900" text-anchor="middle">10</text><path d="M781.8 443.3v3" stroke="#222" stroke-width=".8"/><text x="781.8" y="457.900" text-anchor="middle">12</text><text transform="translate(547.200 374) rotate(-90)" text-anchor="middle" font-size="8.300">Category</text><rect x="760.600" y="307.200" width="35.600" height="14.500" rx="1.500" fill="#fff" stroke="#d4d4d4" stroke-width=".8"/><rect x="764" y="311.700" width="17" height="5.300" fill="#1f77b4"/><text x="787.500" y="317.300">$</text></svg>
<span class="a" style="left:544.5px;top:477.9px;font-size:19.7px;letter-spacing:-0.31px;color:#444;">Image</span>
<span class="a" style="left:544.3px;top:512.8px;font-size:11.5px;letter-spacing:-0.68px;color:#333;">size</span>
<svg style="left:544px;top:535px" width="15" height="15" fill="none" stroke="#333" stroke-width="1.200"><rect x=".7" y=".7" width="13.600" height="13.600" rx=".5"/><path d="M.7 5.200h13.600M.7 9.800h13.600"/></svg>
<span class="a" style="left:568.0px;top:537.3px;font-size:12.5px;letter-spacing:0.01px;color:#444;">447, 274</span>
<svg style="left:545.500px;top:575.500px" width="17" height="17" viewBox="0 0 17 17" fill="none"><circle cx="8.500" cy="8.500" r="6.300" stroke="#43a831" stroke-width="2.800"/><circle cx="8.500" cy="8.500" r="7.600" stroke="#2f8a24" stroke-width=".6" stroke-dasharray="2 1.200"/></svg>
<span class="a" style="left:566.2px;top:578.6px;font-size:12.8px;letter-spacing:-0.35px;color:#1c1c1c;text-shadow:.45px 0 0 #1c1c1c,-.2px 0 0 #1c1c1c;">ANACONDA.</span>
<div class="a" style="left:880px;top:238px;width:18px;height:392px;background:#efefef"></div>
<svg style="left:885.500px;top:243.500px" width="9" height="7"><path d="M4.500 0l4.500 6.500H0z" fill="#7a7a7a"/></svg>
<div class="a" style="left:885.500px;top:255.500px;width:8.500px;height:239px;background:#6b6b6b;border-radius:4.500px"></div>
<svg style="left:885.500px;top:620.500px" width="9" height="7"><path d="M0 0h9L4.500 6.500z" fill="#555"/></svg>

<div class="a" style="left:2px;top:629.500px;width:896px;height:29px;background:#e9e9e8"></div>
<div class="a" style="left:2px;top:658px;width:896px;height:19.500px;background:#f3f3f2;border-top:1px solid #dcdcdc;border-radius:0 0 6px 6px"></div>
<svg style="left:27px;top:638.500px" width="6" height="10" fill="none" stroke="#9a9a9a" stroke-width="1.100"><path d="M5 .5L.8 5 5 9.500"/></svg>
<svg style="left:56.500px;top:638.500px" width="6" height="10" fill="none" stroke="#9a9a9a" stroke-width="1.100"><path d="M1 .5L5.200 5 1 9.500"/></svg>
<div class="a" style="left:106px;top:629px;width:103px;height:27px;background:#f8f8f8;border-radius:0 0 5px 5px"></div>
<span class="a" style="left:113.7px;top:635.5px;font-size:12.5px;letter-spacing:0.10px;color:#1a1a1a;text-shadow:.35px 0 0 #1a1a1a;">Python in Excel</span>
<div class="a" style="left:113.700px;top:649.800px;width:87.500px;height:2px;background:#1e7145;border-radius:1px"></div>
<div class="a" style="left:212px;top:636px;width:1px;height:16px;background:#cfcfcf"></div>
<svg style="left:250px;top:637.500px" width="11" height="11" fill="none" stroke="#444" stroke-width="1.100"><path d="M5.500 0v11M0 5.500h11"/></svg>
<svg style="left:762px;top:625.5px" width="37" height="29" viewBox="0 0 38 30" fill="#fdfdfd" stroke="#d9d9d9" stroke-width=".8"><path d="M13 1C6 1 1 5.300 1 10.500c0 3 1.700 5.600 4.300 7.300L4 21.500l4.300-2.300c1.400.5 3 .8 4.700.8.300 0 .600 0 .900 0-.2-.8-.3-1.500-.3-2.300C13.600 12 18 8 24 8c.3 0 .600 0 .900 0C24 4 19 1 13 1z"/><path d="M36.500 18c0-4.700-4.600-8.500-10.200-8.500S16 13.300 16 18s4.600 8.500 10.300 8.500c1.300 0 2.500-.2 3.700-.6l3.500 2-1-3.200c2.400-1.600 4-4 4-6.700z"/><circle cx="9" cy="7.500" r="1.300" fill="#cfcfcf"/><circle cx="17" cy="7.500" r="1.300" fill="#cfcfcf"/><circle cx="22.500" cy="15.500" r="1.100" fill="#cfcfcf"/><circle cx="30" cy="15.500" r="1.100" fill="#cfcfcf"/></svg>
<span class="a" style="left:805.500px;top:630.2px;font-size:21.500px;font-family:'Liberation Sans','Noto Sans CJK SC',sans-serif;color:#5a5a5a;letter-spacing:.3px;text-shadow:0 0 2px #fff,0 0 3px #fff">量子位</span>
<svg style="left:784px;top:663px" width="14" height="13" viewBox="0 0 14 13" fill="none" stroke="#333" stroke-width="1.200"><path d="M8.500 9.500H2a1 1 0 0 1-1-1V2a1 1 0 0 1 1-1h9.500a1 1 0 0 1 1 1v5M4 12h4"/><path d="M7 6l1.500 1.500L11 4.500"/></svg>
<span class="a" style="left:800.0px;top:664.6px;font-size:11.5px;letter-spacing:-0.73px;color:#333;">Display Settings</span>
<span class="a" style="left:721px;top:649px;font-size:27px;font-family:'Liberation Sans','Noto Sans CJK SC',sans-serif;color:rgba(255,255,255,.62);letter-spacing:1px">快传号/量子位</span>

</div>
</body></html>
